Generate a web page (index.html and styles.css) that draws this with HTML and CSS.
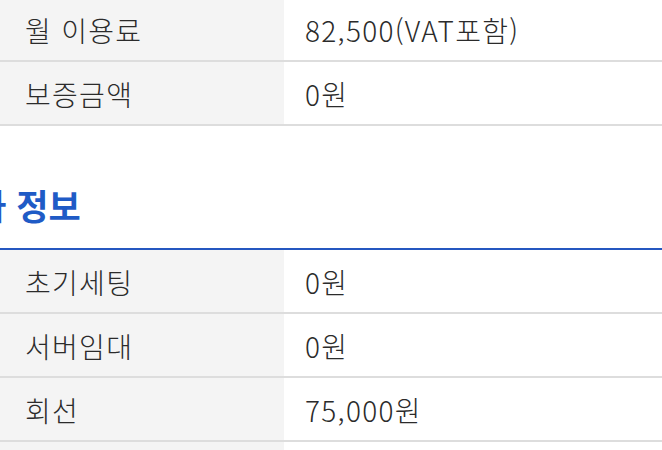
FILE: index.html
```html
<!DOCTYPE html>
<html lang="ko">
<head>
<meta charset="utf-8">
<link rel="stylesheet" href="styles.css">
</head>
<body>
<div class="page">
  <div class="table">
    <div class="row"><div class="th">월 이용료</div><div class="td">82,500(VAT포함)</div></div>
    <div class="row"><div class="th">보증금액</div><div class="td">0원</div></div>
  </div>
  <h2 class="section-title"><span class="title-text">추가 정보</span></h2>
  <div class="table table-blue">
    <div class="row"><div class="th">초기세팅</div><div class="td">0원</div></div>
    <div class="row"><div class="th">서버임대</div><div class="td">0원</div></div>
    <div class="row"><div class="th">회선</div><div class="td">75,000원</div></div>
    <div class="row"><div class="th">&nbsp;</div><div class="td">&nbsp;</div></div>
  </div>
</div>
</body>
</html>
```
FILE: styles.css
```css
html, body {
  margin: 0;
  padding: 0;
  background: #ffffff;
  overflow: hidden;
}
body {
  font-family: "Noto Sans CJK KR", "Noto Sans", sans-serif;
  color: #2b2b2b;
}
.page {
  width: 662px;
  margin-top: -2px;
}
.table {
  display: flex;
  flex-direction: column;
}
.table-blue {
  border-top: 2px solid #2557c0;
}
.row {
  display: grid;
  grid-template-columns: 284px 1fr;
  height: 62px;
  border-bottom: 2px solid #dddddd;
}
.th,
.td {
  display: flex;
  align-items: center;
  font-size: 28px;
  font-weight: 300;
  letter-spacing: 1.3px;
  padding-top: 2px;
  box-sizing: border-box;
}
.th {
  background: #f4f4f4;
  padding-left: 25px;
}
.td {
  background: #ffffff;
  padding-left: 21px;
}
.section-title {
  margin: 0;
  height: 122px;
  display: flex;
  align-items: flex-end;
  padding-bottom: 26px;
  box-sizing: border-box;
  overflow: hidden;
  white-space: nowrap;
}
.title-text {
  margin-left: -58px;
  font-size: 35px;
  font-weight: 700;
  color: #1f5bc6;
  line-height: 1;
}
```
